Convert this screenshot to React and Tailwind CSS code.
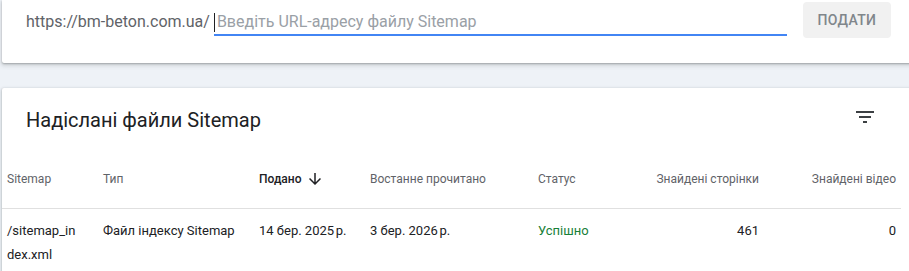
import React from 'react';

function FilterIcon() {
  return (
    <svg width="24" height="24" viewBox="0 0 24 24" className="fill-[#3c4043]">
      <path d="M10 18h4v-2h-4v2zM3 6v2h18V6H3zm3 7h12v-2H6v2z" />
    </svg>
  );
}

function ArrowDown() {
  return (
    <svg width="18" height="18" viewBox="0 0 24 24" className="fill-[#202124]">
      <path d="M20 12l-1.41-1.41L13 16.17V4h-2v12.17l-5.58-5.59L4 12l8 8 8-8z" />
    </svg>
  );
}

export default function App() {
  return (
    <div className="w-[909px] h-[271px] overflow-hidden bg-[#eef2f7] pl-[2px] font-['Roboto','Liberation_Sans',sans-serif]">
      {/* Submit card */}
      <div className="w-[930px] h-[63px] bg-white rounded-b-[2px] shadow-[0_1px_2px_rgba(60,64,67,0.35),0_2px_4px_1px_rgba(60,64,67,0.15)]">
        <div className="flex items-start pt-[2px] pl-[24px]">
          <div className="flex items-center h-[36px] pt-[3px]">
            <span className="text-[16px] text-[#5f6368] whitespace-nowrap">https://bm-beton.com.ua/</span>
          </div>
          <div className="ml-[4px] w-[573px] h-[34px] flex items-center border-b-2 border-[#4285f4] relative">
            <span className="absolute left-0 top-[11px] w-px h-[19px] bg-[#202124]"></span>
            <span className="pl-[3px] pt-[7px] text-[16px] text-[#9aa0a6] whitespace-nowrap">Введіть URL-адресу файлу Sitemap</span>
          </div>
          <button className="ml-[16px] w-[88px] h-[36px] rounded-[4px] bg-[#f1f1f1] text-[14px] font-medium tracking-[0.3px] text-[#80868b]">
            ПОДАТИ
          </button>
        </div>
      </div>

      {/* Submitted sitemaps card */}
      <div className="mt-[25px] w-[930px] h-[200px] bg-white rounded-t-[2px] shadow-[0_1px_2px_rgba(60,64,67,0.3),0_1px_3px_1px_rgba(60,64,67,0.15)]">
        <div className="h-[62px] flex items-center justify-between pl-[24px] w-[907px]">
          <h2 className="text-[20px] text-[#202124] pt-[2px]">Надіслані файли Sitemap</h2>
          <div className="mr-[32px] -mt-[4px]">
            <FilterIcon />
          </div>
        </div>

        <div className="grid grid-cols-[96px_156px_111px_168px_100px_131px_137px] text-[12px] text-[#5f6368] h-[59px] items-center border-b border-[#e0e0e0] w-[899px]">
          <div className="pl-[5px]">Sitemap</div>
          <div className="pl-[5px]">Тип</div>
          <div className="pl-[5px] flex items-center gap-[5px] text-[#202124] font-medium">
            Подано <ArrowDown />
          </div>
          <div className="pl-[5px]">Востанне прочитано</div>
          <div className="pl-[5px]">Статус</div>
          <div className="pr-[5px] text-right">Знайдені сторінки</div>
          <div className="pr-[5px] text-right">Знайдені відео</div>
        </div>

        <div className="grid grid-cols-[96px_156px_111px_168px_100px_131px_137px] text-[13px] text-[#202124] leading-[24px] pt-[10px] w-[899px]">
          <div className="pl-[5px] pr-[12px]">/sitemap_in<wbr />dex.xml</div>
          <div className="pl-[5px] whitespace-nowrap">Файл індексу Sitemap</div>
          <div className="pl-[5px] whitespace-nowrap">14 бер. 2025{'\u202F'}р.</div>
          <div className="pl-[5px] whitespace-nowrap">3 бер. 2026{'\u202F'}р.</div>
          <div className="pl-[5px] text-[#188038]">Успішно</div>
          <div className="pr-[5px] text-right">461</div>
          <div className="pr-[5px] text-right">0</div>
        </div>
      </div>
    </div>
  );
}
